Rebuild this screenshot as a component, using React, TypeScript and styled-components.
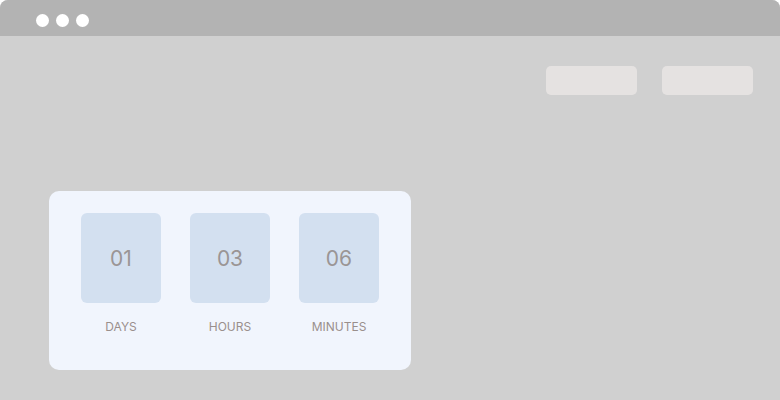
import React from "react";
import styled, { createGlobalStyle } from "styled-components";

const Global = createGlobalStyle`
  html, body { margin: 0; padding: 0; background: #ffffff; }
  body { font-family: Inter, "Noto Sans", sans-serif; }
`;

const Window = styled.div`
  width: 780px;
  height: 400px;
  background: #d0d0d0;
  border-radius: 8px 8px 0 0;
  overflow: hidden;
  display: flex;
  flex-direction: column;
`;

const TitleBar = styled.div`
  height: 36px;
  background: #b3b3b3;
  display: flex;
  align-items: center;
  gap: 7px;
  padding: 4px 0 0 36px;
  box-sizing: border-box;
`;

const Dot = styled.span`
  width: 13px;
  height: 13px;
  border-radius: 50%;
  background: #ffffff;
`;

const Body = styled.div`
  flex: 1;
  display: flex;
  flex-direction: column;
  padding: 30px 27px 0 49px;
`;

const Toolbar = styled.div`
  display: flex;
  justify-content: flex-end;
  gap: 25px;
`;

const GhostButton = styled.div`
  width: 91px;
  height: 29px;
  border-radius: 5px;
  background: #e5e2e1;
`;

const Card = styled.div`
  margin-top: 96px;
  width: 362px;
  height: 179px;
  box-sizing: border-box;
  border-radius: 10px;
  background: #f1f5fd;
  padding: 22px 32px 0;
  display: flex;
  gap: 29px;
`;

const Unit = styled.div`
  display: flex;
  flex-direction: column;
  align-items: center;
  width: 80px;
`;

const NumberBox = styled.div`
  width: 80px;
  height: 90px;
  border-radius: 6px;
  background: #d3e0f0;
  display: flex;
  align-items: center;
  justify-content: center;
  font-size: 21px;
  color: #9a9595;
  font-weight: 400;
`;

const Label = styled.div`
  margin-top: 16px;
  font-size: 12px;
  line-height: 16px;
  color: #9a8f8c;
  text-transform: uppercase;
`;

const units = [
  { value: "01", label: "Days" },
  { value: "03", label: "Hours" },
  { value: "06", label: "Minutes" },
];

export default function App() {
  return (
    <>
      <Global />
      <Window>
        <TitleBar>
          <Dot />
          <Dot />
          <Dot />
        </TitleBar>
        <Body>
          <Toolbar>
            <GhostButton />
            <GhostButton />
          </Toolbar>
          <Card>
            {units.map((u) => (
              <Unit key={u.label}>
                <NumberBox>{u.value}</NumberBox>
                <Label>{u.label}</Label>
              </Unit>
            ))}
          </Card>
        </Body>
      </Window>
    </>
  );
}
